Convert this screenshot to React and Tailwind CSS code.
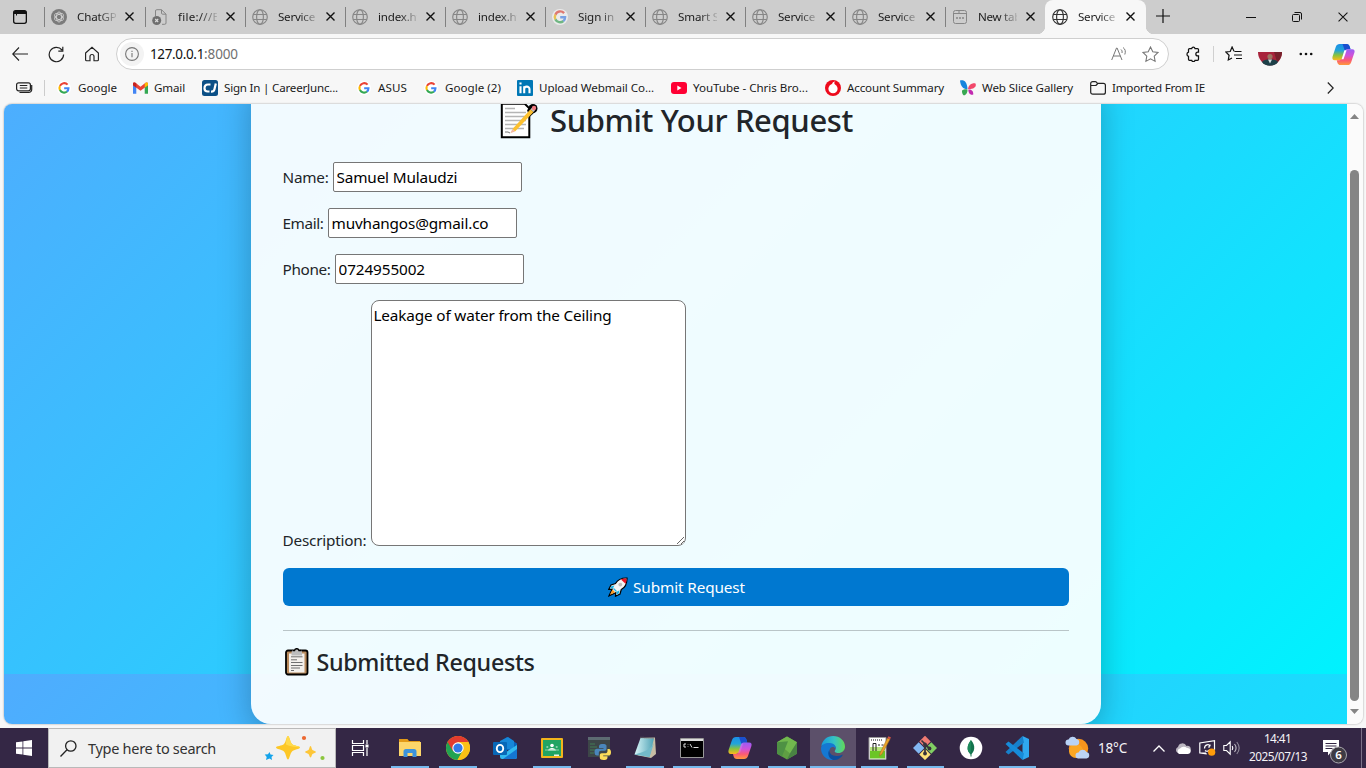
import React, { useLayoutEffect, useRef, useState } from "react";

/* Text run whose letter spacing is computed so that it fills `w` pixels. */
function Fit({ w, className = "", children }) {
  const ref = useRef(null);
  const [ls, setLs] = useState(0);
  useLayoutEffect(() => {
    const natural = ref.current.getBoundingClientRect().width;
    setLs((w - natural) / String(children).length);
  }, []);
  return (
    <span ref={ref} className={"inline-block shrink-0 whitespace-pre " + className} style={{ letterSpacing: ls + "px" }}>
      {children}
    </span>
  );
}

function Globe({ dark }) {
  return (
    <svg width="16" height="16" viewBox="0 0 16 16" fill="none" stroke={dark ? "#333" : "#868686"} strokeWidth="1.15">
      <circle cx="8" cy="8" r="7.3" />
      <ellipse cx="8" cy="8" rx="3.4" ry="7.3" />
      <path d="M1.2 5.5h13.6M1.2 10.5h13.6" />
    </svg>
  );
}

function GoogleG({ size = 16, faded }) {
  return (
    <svg width={size} height={size} viewBox="0 0 16 16" opacity={faded ? 0.6 : 1}>
      <circle cx="8" cy="8" r="8" fill="#fff" />
      <g fill="none" strokeWidth="2.4">
        <path d="M12.1 4.1A5.2 5.2 0 0 0 3.4 5.7" stroke="#ea4335" />
        <path d="M3.4 5.6a5.2 5.2 0 0 0 0 4.9" stroke="#fbbc05" />
        <path d="M3.4 10.4a5.2 5.2 0 0 0 8 1.6" stroke="#34a853" />
        <path d="M11.3 12.1A5 5 0 0 0 13.1 8.2H8.2" stroke="#4285f4" />
      </g>
    </svg>
  );
}

function ChatIcon() {
  return (
    <svg width="16" height="16" viewBox="0 0 16 16">
      <circle cx="8" cy="8" r="8" fill="#7b7b7b" />
      <g fill="none" stroke="#d8d8d8" strokeWidth=".8">
        <ellipse cx="8" cy="8" rx="2.5" ry="5" />
        <ellipse cx="8" cy="8" rx="2.5" ry="5" transform="rotate(60 8 8)" />
        <ellipse cx="8" cy="8" rx="2.5" ry="5" transform="rotate(120 8 8)" />
      </g>
    </svg>
  );
}

function FileIcon() {
  return (
    <svg width="16" height="16" viewBox="0 0 16 16" fill="none">
      <path d="M3.5 7V2A1.3 1.3 0 0 1 4.8 0.7H9.5L14 5.2V14a1.3 1.3 0 0 1-1.3 1.3H10M9.5 0.7V4a1.2 1.2 0 0 0 1.2 1.2H14" stroke="#868686" />
      <circle cx="4.7" cy="11.5" r="4.5" fill="#6f6f6f" />
      <path d="M3.2 10l3 3m0-3l-3 3" stroke="#ddd" strokeWidth="1.1" />
    </svg>
  );
}

function NewTabIcon() {
  return (
    <svg width="16" height="16" viewBox="0 0 16 16" fill="none" stroke="#868686">
      <rect x="1.5" y="1.5" width="13" height="13" rx="2" />
      <path d="M2 4.5h12M7 1.5v3" />
      <path d="M4 9h2m1 0h2m1 0h2" strokeWidth="1.6" />
    </svg>
  );
}

const X = ({ s = 9, w = 1.4 }) => (
  <svg width={s} height={s} viewBox="0 0 9 9" className="shrink-0" stroke="#111" strokeWidth={w}>
    <path d="M.5.5l8 8m0-8l-8 8" />
  </svg>
);

const TABS = [
  ["ChatGPT", 46, <ChatIcon />],
  ["file:///E:/", 49, <FileIcon />],
  ["Service", 37, <Globe />],
  ["index.html", 56, <Globe />],
  ["index.html", 56, <Globe />],
  ["Sign in", 36, <GoogleG faded />],
  ["Smart S", 41, <Globe />],
  ["Service", 37, <Globe />],
  ["Service", 37, <Globe />],
  ["New tab", 43, <NewTabIcon />],
];

function TabBody({ title, w, icon }) {
  return (
    <>
      <span className="flex w-4 shrink-0">{icon}</span>
      <span className="ml-[10px] w-[39px] shrink-0 overflow-hidden text-[11.6px] leading-5 text-[#1b1b1b] [mask-image:linear-gradient(to_right,#000_55%,transparent_108%)]">
        <Fit w={w}>{title}</Fit>
      </span>
      <span className="ml-[9px] flex"><X /></span>
    </>
  );
}

function TabStrip() {
  return (
    <div className="flex h-[34px] bg-[#cdcdcd]">
      <div className="flex w-[44px] items-center pl-[13px]">
        <svg width="14" height="14" viewBox="0 0 14 14">
          <rect x=".65" y=".65" width="12.7" height="12.7" rx="2" fill="none" stroke="#111" strokeWidth="1.3" />
          <path d="M.5 4V3A2.5 2.5 0 0 1 3 .5h8A2.500 2.500 0 0 1 13.500 3v1z" fill="#111" />
          <path d="M3.500 4v1.500" stroke="#111" />
        </svg>
      </div>
      {TABS.map(([t, w, icon], i) => (
        <div key={i} className={"flex shrink-0 items-center pb-px " + (i === 0 ? "w-[101px]" : "w-[100px]")}>
          <span className="mr-[6px] h-5 w-px bg-[#808080]" />
          <TabBody title={t} w={w} icon={icon} />
        </div>
      ))}
      <div className="relative flex w-[101px] shrink-0 items-center rounded-t-lg bg-[#f7f7f7] pb-px pl-[7px]">
        <span className="absolute -left-2 bottom-0 h-2 w-2 bg-[radial-gradient(circle_at_0_0,transparent_8px,#f7f7f7_8.5px)]" />
        <span className="absolute -right-2 bottom-0 h-2 w-2 bg-[radial-gradient(circle_at_100%_0,transparent_8px,#f7f7f7_8.5px)]" />
        <TabBody title="Service" w={37} icon={<Globe dark />} />
      </div>
      <div className="flex items-center pb-[2px] pl-[10px]">
        <svg width="14" height="14" viewBox="0 0 14 14" stroke="#111" strokeWidth="1.2"><path d="M0 7h14M7 0v14" /></svg>
      </div>
      <div className="flex flex-1 items-center justify-end gap-[36px] pr-[18px]">
        <svg width="10" height="10" viewBox="0 0 10 10" stroke="#111"><path d="M0 5.500h10" /></svg>
        <svg width="10" height="10" viewBox="0 0 10 10" fill="none" stroke="#111">
          <rect x=".5" y="2.500" width="7" height="7" rx="1" />
          <path d="M2.500.5H8A1.500 1.500 0 0 1 9.500 2v5.500" />
        </svg>
        <X s={10} w={0.95} />
      </div>
    </div>
  );
}

function Copilot({ size = 22, id }) {
  return (
    <svg width={size} height={size} viewBox="0 0 24 24">
      <defs>
        <linearGradient id={id + "a"} x1="0" y1="0" x2="0" y2="1">
          <stop offset="0" stopColor="#1b8fe8" /><stop offset=".4" stopColor="#22a4d8" /><stop offset=".7" stopColor="#8cc33a" /><stop offset="1" stopColor="#ffb81c" />
        </linearGradient>
        <linearGradient id={id + "b"} x1="0" y1="0" x2="0" y2="1">
          <stop offset="0" stopColor="#9a5cf5" /><stop offset=".4" stopColor="#d052d8" /><stop offset=".7" stopColor="#fb5a74" /><stop offset="1" stopColor="#ff9a3a" />
        </linearGradient>
      </defs>
      <path d="M8 1h7c2 0 3 1.200 3.500 3l.8 2.500h-2.600c-1.700 0-2.700.9-3.200 2.500l-1.900 6C11 17 10 18 8 18H3C.6 18 0 16 .6 14L4 4c.7-2 2-3 4-3z" fill={`url(#${id}a)`} />
      <path d="M11 1h4.200c2 0 2.900 1.200 3.400 3l.7 2.500h-2.600c-1.700 0-2.500.7-3.100 2z" fill="#1b4fcf" />
      <path d="M16 23H9c-2 0-3-1.200-3.500-3L5 18h2.600c1.700 0 2.700-.9 3.200-2.500l1.900-6C13.300 7.500 14 6.500 16 6.500h5c2.400 0 3 1.500 2.400 3.500L20 20c-.7 2-2 3-4 3z" fill={`url(#${id}b)`} />
      <path d="M10 17l3-9.500h2.200l-3.200 9.500z" fill="#fff" opacity={id === "tb" ? 1 : 0.15} />
    </svg>
  );
}

const STAR = "M8 .9l2.150 4.500 4.900.7-3.550 3.450.85 4.900L8 12.100l-4.350 2.350.85-4.900L.95 6.100l4.900-.7z";

function Toolbar() {
  return (
    <div className="flex h-[40px] items-center">
      <div className="flex w-[116px] items-center pl-3">
        <svg width="16" height="14" viewBox="0 0 16 14" fill="none" stroke="#222" strokeWidth="1.1"><path d="M16 7H.8M7 .5L.7 7 7 13.500" /></svg>
        <svg className="ml-5" width="17" height="17" viewBox="0 0 17 17" fill="none" stroke="#222" strokeWidth="1.2"><path d="M15.600 8.500A7.200 7.200 0 1 1 14 4M14.800.8v4.400h-4.500" /></svg>
        <svg className="ml-[19px]" width="16" height="16" viewBox="0 0 16 16" fill="none" stroke="#222" strokeWidth="1.15"><path d="M1.600 7L8 1.200 14.400 7v6.700a1 1 0 0 1-1 1H10V10.500a2 2 0 0 0-4 0v4.200H2.600a1 1 0 0 1-1-1z" /></svg>
      </div>
      <div className="flex h-8 w-[1053px] items-center rounded-full border border-[#cfcfcf] bg-white pl-[3px]">
        <span className="flex h-6 w-6 items-center justify-center rounded-full bg-[#f3f3f3]">
          <svg width="14" height="14" viewBox="0 0 14 14" fill="none" stroke="#767676" strokeWidth="1.1"><circle cx="7" cy="7" r="6.4" /><path d="M7 6v4.200M7 3.700v1.200" /></svg>
        </span>
        <span className="ml-[6px] flex text-[13.5px] text-[#111]">
          <Fit w={54}>127.0.0.1</Fit><Fit w={34} className="text-[#707070]">:8000</Fit>
        </span>
        <svg className="ml-auto" width="16" height="16" viewBox="0 0 16 16" fill="none" stroke="#777"><path d="M.7 14L5.500 2h.6L11 14M2.300 10h7M10 3.500c1 .8 1.300 2 1 3.500M12 1.500c2.300 1.600 2.900 4 1.800 7" /></svg>
        <svg className="mr-[9px] ml-[15px]" width="17" height="17" viewBox="0 0 16 16" fill="none" stroke="#777"><path d={STAR} /></svg>
      </div>
      <svg className="ml-[16px]" width="16" height="16" viewBox="0 0 16 16" fill="none" stroke="#111" strokeWidth="1.25"><path d="M4.500 2.500h2.200a1.700 1.700 0 0 1 3.300 0h2.500a1 1 0 0 1 1 1V6h-.7a1.900 1.900 0 0 0 0 3.900h.7v3.400a1 1 0 0 1-1 1h-2.500a1.700 1.700 0 0 1-3.300 0H4.500a1 1 0 0 1-1-1V10.300a2.200 2.200 0 0 1 0-4.200V3.500a1 1 0 0 1 1-1z" /></svg>
      <span className="ml-[12px] h-4 w-px bg-[#d0d0d0]" />
      <svg className="ml-[11px]" width="17" height="16" viewBox="0 0 17 16" fill="none" stroke="#111" strokeWidth="1.2"><path d="M9 5.200L7.100 1 5.200 5.500.8 6l3.300 3.200L3.300 14 7 12M9.500 5.500h7M9 9h8M11 12.500h6" /></svg>
      <svg className="mt-[9px] ml-[16px]" width="24" height="14" viewBox="0 0 24 14">
        <path d="M0 0h24a12 13.500 0 0 1-24 0z" fill="#a8243c" />
        <path d="M16 0h8c0 5-3 9-5 10z" fill="#77222c" />
        <circle cx="12" cy="4.500" r="2.600" fill="#9b7762" />
        <path d="M4 10c1-2 4-2.500 8-2.500s7 .5 8 2.500c-3 5-13 5-16 0z" fill="#1d4048" />
        <path d="M10 7.500l2 4 2-4z" fill="#d6e1e2" />
      </svg>
      <svg className="ml-[17px]" width="14" height="4" viewBox="0 0 14 4" fill="#111"><circle cx="1.800" cy="2" r="1.300" /><circle cx="7" cy="2" r="1.300" /><circle cx="12.200" cy="2" r="1.300" /></svg>
      <span className="ml-[19px] flex"><Copilot id="tb" size={23} /></span>
    </div>
  );
}

const FAVS = [
  ["Google", 39, "w-[76px]", <GoogleG size={14} />],
  ["Gmail", 31, "w-[70px]", <svg width="15" height="12" viewBox="0 0 16 12"><path d="M0 1.500V12h3.500V4.500z" fill="#4285f4" /><path d="M16 1.500V12h-3.500V4.500z" fill="#34a853" /><path d="M0 1.500C0 0 1.500-.3 2.600.5L8 4.700 13.400.5c1.100-.8 2.600-.5 2.600 1V3L8 9 0 3z" fill="#ea4335" /><path d="M12.500 1.200l.9-.7c1.100-.8 2.600-.5 2.600 1V3l-3.500 2.600z" fill="#fbbc04" /><path d="M0 1.500C0 0 1.500-.3 2.600.5l.9.7v4.400L0 3z" fill="#c5221f" /></svg>],
  ["Sign In | CareerJunc...", 114, "w-[154px]", <svg width="16" height="16" viewBox="0 0 16 16"><rect width="16" height="16" rx="2.5" fill="#0b4f86" /><path d="M8.500 4.500H6C3.500 4.500 2.500 6.500 2.500 8.500s1.300 3 3.300 3h1.700M13.800 3.500l-1.400 6c-.4 1.600-1.500 2.300-3.400 2.200" fill="none" stroke="#fff" strokeWidth="2.2" /></svg>],
  ["ASUS", 29, "w-[67px]", <GoogleG size={14} />],
  ["Google (2)", 56, "w-[94px]", <GoogleG size={14} />],
  ["Upload Webmail Co...", 115, "w-[154px]", <svg width="16" height="16" viewBox="0 0 16 16"><rect width="16" height="16" rx="1" fill="#0077b5" /><path d="M3.500 6.200v7M3.500 2.500v2.100M7.200 13.200v-7M7.200 9c0-3 5.300-3.300 5.300.2v4" stroke="#fff" strokeWidth="2.1" fill="none" /></svg>],
  ["YouTube - Chris Bro...", 115, "w-[154px]", <svg width="16" height="12" viewBox="0 0 16 12"><rect width="16" height="12" rx="3" fill="#ff0033" /><path d="M6.300 3.500v5l4.200-2.500z" fill="#fff" /></svg>],
  ["Account Summary", 97, "w-[135px]", <svg width="16" height="16" viewBox="0 0 16 16"><circle cx="8" cy="8" r="8" fill="#ee0a1c" /><circle cx="8" cy="8.700" r="4.600" fill="#fff" /><path d="M7 4.500C7 2.800 8.500 1.500 10.500 1.200 9 2 9 3.500 10 4.800z" fill="#fff" /></svg>],
  ["Web Slice Gallery", 91, "w-[130px]", <svg width="16" height="16" viewBox="0 0 16 16"><path d="M0 .5c4-1 7 1 7.500 8.500C4 9.500.5 7 0 .5z" fill="#1685dd" /><path d="M2 10.500c2-1.500 4-1.500 5.500-1 .2 3-1.500 5.500-3.500 6-1.500-.5-2.200-3-2-5z" fill="#38a852" /><path d="M8 9C8.500 5 12 2.800 15.500 3.500 17 7 13 9.500 8 9z" fill="#f2486b" /><path d="M8.300 9.500c3-.3 5 1 5 5-3 1.200-5-1.500-5-5z" fill="#c22bb0" /></svg>],
  ["Imported From IE", 93, "w-[130px]", <svg width="16" height="14" viewBox="0 0 16 14" fill="none" stroke="#222" strokeWidth="1.2"><path d="M.7 4.300V2.600a2 2 0 0 1 2-2h2.600a1.500 1.500 0 0 1 1.100.5l1 1.200h6a2 2 0 0 1 2 2v6.900a2 2 0 0 1-2 2H2.700a2 2 0 0 1-2-2zM.7 4.500h4.600a1.500 1.500 0 0 0 1.100-.5L8 2.300" /></svg>],
];

function Favorites() {
  return (
    <div className="flex h-[30px] items-center pb-[2px]">
      <div className="flex w-[44px] pl-4">
        <svg width="17" height="12" viewBox="0 0 17 12" fill="none" stroke="#222" strokeWidth="1.2"><rect x=".6" y=".8" width="13.800" height="8" rx="2" /><path d="M3.800 3.500h7.500M3.800 6h7.500" /><path d="M15.700 3v4.500a3 3 0 0 1-3 3H3.500" /></svg>
      </div>
      <span className="mr-[11px] h-4 w-px bg-[#cccccc]" />
      {FAVS.map(([t, w, cls, icon], i) => (
        <div key={i} className={"flex shrink-0 items-center text-[11.6px] leading-4 text-[#1a1a1a] " + cls}>
          <span className="mr-[6px] flex w-4 shrink-0 items-center justify-center">{icon}</span>
          <Fit w={w}>{t}</Fit>
        </div>
      ))}
      <svg className="ml-[107px]" width="7" height="12" viewBox="0 0 7 12" fill="none" stroke="#222" strokeWidth="1.2"><path d="M.8.500L6.200 6 .8 11.500" /></svg>
    </div>
  );
}

function Memo() {
  return (
    <svg width="39" height="40" viewBox="0 0 39 40" className="-mt-[3px] shrink-0">
      <path d="M1.800 4.800h23l4.500 4.500v28.900H1.800z" fill="#fff" stroke="#000" strokeWidth="2" />
      <path d="M5 9.500h10M5 13.500h21M5 17.500h21M5 21.500h21M5 25.500h21M5 29.500h19" stroke="#b5b5b5" strokeWidth="1.3" />
      <circle cx="33" cy="9.500" r="4.500" fill="#000" />
      <path d="M27 11l4-3 4 5-5.500 5z" fill="#000" />
      <path d="M12.500 30L30.500 10.200l3 2.800L15 32.500z" fill="#fcc02f" />
      <path d="M12.500 30l-2.300 4.300L15 32.500z" fill="#f2b7a0" />
      <path d="M30.500 10.200l1.500-1.500 3 2.800-1.500 1.500z" fill="#c8c8c8" />
      <circle cx="34" cy="9" r="2.200" fill="#ef7a80" />
      <path d="M5 33h3l2 1" stroke="#777" fill="none" />
    </svg>
  );
}

function Clipboard() {
  return (
    <svg width="24" height="28" viewBox="0 0 24 28" className="shrink-0">
      <rect x="1" y="2.500" width="21.500" height="24" rx="2" fill="#b88a5c" stroke="#000" strokeWidth="1.8" />
      <path d="M4 5.500h15.500v19H4z" fill="#f3f0ec" />
      <path d="M6.500 4.500a5.300 4.500 0 0 1 10.500 0v3H6.500z" fill="#bdbdbd" />
      <path d="M7.500 2.500h2a2.300 2.300 0 0 1 4.500 0h2" stroke="#000" strokeWidth="1.4" fill="none" />
      <path d="M6 8.800h11.500M6 11.800h6M6 14.500h11.500M6 17.500h11.500M6 20h9M6 22.500h3" stroke="#6f6f6f" strokeWidth="1" />
    </svg>
  );
}

function Rocket() {
  return (
    <svg width="20" height="20" viewBox="0 0 20 20" className="shrink-0">
      <path d="M19 1C13 .8 9.500 3 7.500 6.500L3 8 .8 12.300l3.400-.2L1 18.800l6.800-3-.3 3.400L12 17l1.300-4.500C17 10.500 19.200 7 19 1z" fill="#f4f4f4" stroke="#000" strokeWidth="1.2" />
      <path d="M18.500 1.500c-2.500 0-4 .3-5.500 1l4.500 4.300c.7-1.500 1-3.200 1-5.300z" fill="#e81224" />
      <path d="M6.500 8.500l-3 .5-1.500 2.500 3-.3zM11.500 13.300l-.5 3-2.500 1.700.3-3.300z" fill="#18b5e8" />
      <circle cx="12.300" cy="7.600" r="1.900" fill="#bcbcbc" />
      <path d="M4.500 12.500L2 17.800l5.200-2.500z" fill="#ff9a1f" />
      <path d="M5.500 11.500l3 3" stroke="#27b7e8" strokeWidth="1.3" />
    </svg>
  );
}

function Field({ label, w, value, cls }) {
  return (
    <label className="mb-4 flex h-[30px] items-center">
      <Fit w={w} className="mr-1 pt-px">{label}</Fit>
      <input defaultValue={value} className={"h-[30px] w-[189px] rounded-[2px] border border-[#767676] bg-white px-[3px] text-black " + cls} />
    </label>
  );
}

function RequestPage() {
  return (
    <div className="flex flex-1 justify-center overflow-hidden bg-[linear-gradient(135deg,#4facfe,#00f2fe)] bg-[length:100%_620px] bg-[position:0_-50px]">
      <main className="-mt-5 h-[640px] w-[850px] rounded-b-[20px] bg-white/[0.93] px-8 pt-[14px] text-[15.3px] text-[#212529] shadow-[0_8px_32px_rgba(0,0,0,0.25)]">
        <h1 className="flex h-[45px] items-center justify-center pl-[2px] text-[31px] font-medium">
          <Memo />
          <Fit w={303} className="ml-[11px]">Submit Your Request</Fit>
        </h1>
        <form className="pt-[19px]">
          <Field label="Name:" w={46} value="Samuel Mulaudzi" cls="tracking-[-0.15px]" />
          <Field label="Email:" w={41} value="muvhangos@gmail.co" cls="tracking-[-0.15px]" />
          <Field label="Phone:" w={48} value="0724955002" cls="tracking-[-0.1px]" />
          <label className="flex items-end">
            <Fit w={84} className="mr-1 mb-[-6px]">Description:</Fit>
            <textarea defaultValue="Leakage of water from the Ceiling" className="h-[246px] w-[315px] resize rounded-lg border border-[#767676] bg-white px-[2px] py-[2px] leading-6 tracking-[-0.15px] text-black" />
          </label>
          <button type="button" className="mt-[22px] flex h-[38px] w-full items-center justify-center rounded-md bg-[#0078d0] pl-[2px] text-white">
            <Rocket />
            <Fit w={112} className="ml-[5px]">Submit Request</Fit>
          </button>
        </form>
        <hr className="mt-6 border-t border-[#b9c5c8]" />
        <h2 className="mt-[13px] flex h-9 items-center text-[23.3px] font-medium">
          <span className="ml-[2px] flex"><Clipboard /></span>
          <Fit w={218} className="ml-2">Submitted Requests</Fit>
        </h2>
      </main>
    </div>
  );
}

function ScrollBar() {
  return (
    <div className="flex w-4 flex-col items-center bg-[#fbfbfb] pt-[10px] pb-[9px]">
      <svg className="mr-px" width="9" height="5" viewBox="0 0 9 5" fill="#858585"><path d="M0 5h9L4.500 0z" /></svg>
      <span className="mt-[51px] mr-px h-[531px] w-[9px] rounded-full bg-[#858585]" />
      <svg className="mt-[8px] mr-px" width="9" height="5" viewBox="0 0 9 5" fill="#858585"><path d="M0 0h9L4.500 5z" /></svg>
    </div>
  );
}

const Svg = ({ children, v = 24, s = 24 }) => <svg width={s} height={s} viewBox={`0 0 ${v} ${v}`}>{children}</svg>;

const APPS = [
  ["w-[48px]", "", <Svg><g fill="none" stroke="#fff" strokeWidth="1.2"><path d="M4.500 4v3.500h11V4M4.500 20v-3.500h11V20M4.500 9.500h11v5h-11zM19 4v4M19 12v8" /></g><path d="M17.500 8.500h3v3h-3z" fill="#fff" /></Svg>],
  ["ml-[2px] w-[48px]", "w-[38px]", <Svg><path d="M1 3h8.500l1.500 2h11v3H1z" fill="#e39b17" /><path d="M1 6h22v14H1z" fill="#fdd66a" /><path d="M5.500 21v-5.500a2.500 2.500 0 0 1 2.500-2.500h8a2.500 2.500 0 0 1 2.500 2.500V21h-4v-4h-5v4z" fill="#3c93dc" /></Svg>],
  ["w-[47px]", "w-[38px]", <Svg><circle cx="12" cy="12" r="12" fill="#fbc116" /><path d="M1.600 6A12 12 0 0 0 11.500 24l5.200-9.300L12 12z" fill="#21a352" /><path d="M12 6h10.400A12 12 0 0 1 11.500 24l5.200-9z" fill="#fbc116" /><path d="M1.600 6l5.200 9L12 6h10.400A12 12 0 0 0 1.600 6z" fill="#e33b2e" /><circle cx="12" cy="12" r="5.700" fill="#fff" /><circle cx="12" cy="12" r="4.600" fill="#3379e8" /></Svg>],
  ["w-[47px]", "", <Svg><path d="M5 7l9-6 10 6.500v11L14 14z" fill="#0a64bd" /><path d="M7 5l8-4 6 4v8H7z" fill="#1687d8" /><path d="M7 12l7 3.500L24 9v12a2 2 0 0 1-2 2H9a2 2 0 0 1-2-2z" fill="#31b9ef" /><path d="M10 23l14-10v8a2 2 0 0 1-2 2z" fill="#1576d1" /><rect y="6" width="14" height="13" rx="1" fill="#0868b7" /><ellipse cx="7" cy="12.500" rx="3.200" ry="3.600" fill="none" stroke="#fff" strokeWidth="1.9" /></Svg>],
  ["w-[47px]", "w-[38px]", <Svg><rect x="1" y="2" width="22" height="20" rx="1" fill="#f2b51c" /><path d="M3 4h18v16H3z" fill="#22a463" /><path d="M14 20h5v-1.500h-5z" fill="#e9f5ee" /><circle cx="12" cy="9.500" r="1.800" fill="#fff" /><path d="M8 14.500c.5-3.500 7.500-3.500 8 0z" fill="#fff" /><circle cx="7.300" cy="11" r="1.100" fill="#8ed0ad" /><circle cx="16.700" cy="11" r="1.100" fill="#8ed0ad" /><path d="M5 14.500h14v-1H5z" fill="#8ed0ad" /></Svg>],
  ["w-[47px]", "", <Svg><path d="M1 1h22v20H1z" fill="#3d4648" /><path d="M1 1h22v3H1z" fill="#5d6b72" /><path d="M3 8h5M3 11h7M3 14h5M3 17h4" stroke="#427c54" /><path d="M16 8c-4 0-4 1-4 4h4.500v.8H10c-2 0-2.500 1.500-2.500 3.500s1 3.300 2.500 3.300h1.800V17c0-1.500 1-2.200 2.500-2.200h3.200c1.300 0 2-.8 2-2V10c0-1.500-1.500-2-3.500-2z" fill="#4a86bb" /><path d="M16.500 24c4 0 4-1.200 4-3.800h-4.300v-.7H22c1.500 0 2-1.500 2-3.300s-.8-3.200-2-3.200h-1.500v2c0 1.500-1 2.300-2.500 2.300h-3.200c-1.300 0-2 .8-2 2v2.500c0 1.500 1.500 2.200 3.700 2.200z" fill="#fbdc5a" /></Svg>],
  ["w-[46px]", "w-[38px]", <Svg><defs><linearGradient id="np" x1="0" x2="1"><stop stopColor="#d9f6f8" /><stop offset="1" stopColor="#4fa2b5" /></linearGradient></defs><path d="M8 2l14-.5L23 18l-5 4L3 19z" fill="#c8bda4" /><path d="M7.500 2L21 2.500 16.500 21 1.500 18.500z" fill="url(#np)" /><path d="M7.500 1.500L21 2" stroke="#6d6f70" strokeWidth="1.5" strokeDasharray="1 1" /><path d="M1.500 18.500l15 2.500 4.500-14C18 14 8 17 1.500 18.500z" fill="#73bac9" /></Svg>],
  ["w-[48px]", "w-[38px]", <Svg><path d="M.5 2.500h23v19H.5z" fill="#000" stroke="#999" /><path d="M1 3h22v2H1z" fill="#ddd" /><path d="M6 8H4v3h2M8 8.500v.5M8 10.500v.5M10 8l2 3.500M13.500 11.500h5" stroke="#ddd" fill="none" /></Svg>],
  ["w-[47px]", "w-[38px]", <Copilot id="ap" size={24} />],
  ["w-[47px]", "w-[38px]", <Svg><path d="M12 .5l10 5.700v11.600L12 23.500 2 17.800V6.200z" fill="#5f9f43" /><path d="M12 .5l10 5.700-7 11.300L2 6.200z" fill="#71b84e" /><path d="M2 6.200l11-1L7 20.500l-5-2.700z" fill="#4e9144" /><path d="M22 6.200v11.600l-10 5.700 3-6z" fill="#498243" /></Svg>],
  ["w-[46px] bg-[#5c506a]", "w-[46px]", <Svg><defs><linearGradient id="eg" x1="0" x2="1"><stop stopColor="#1699dc" /><stop offset=".55" stopColor="#36c3c4" /><stop offset="1" stopColor="#62d957" /></linearGradient></defs><path d="M.3 10C1.500 4 6 0 12 0c7 0 12 5 12 10.500 0 4-3 6.500-6.500 6.500-3 0-4.500-1.200-3.500-2.500 2.500-3.500-1-6.500-5-6.500C5 8 1.500 9 .3 10z" fill="url(#eg)" /><path d="M.1 11.500C.8 8 5 6.500 9 7c4 .5 6.500 3 5.500 6C13 9.500 8 11 8.500 15.500c.5 4 4 7 7 8.200C7 26-.8 19.500.1 11.500z" fill="#1478d2" /><path d="M8.500 14c-.5 5 5 8 13.500 4.500-2 4-6.500 6-10 5.500C6.500 22 6.500 16 8.500 14z" fill="#0d4e9d" /></Svg>],
  ["w-[46px]", "w-[37px]", <Svg><path d="M2 1.500h17v22H2z" fill="#fff" stroke="#999" /><path d="M3 14h15v8.500H3z" fill="#6bc524" /><path d="M3 11h15v4H3z" fill="#b7e67b" /><path d="M4 4h11" stroke="#888" strokeWidth="2" strokeDasharray="1 1" /><path d="M6 15V7.500h3V15M11 9h2M14.500 9h2" stroke="#222" fill="none" /><path d="M13 17L20.500 2l2.500 1.300L15 18l-2.500 2z" fill="#e9a32c" stroke="#9c6b22" strokeWidth=".5" /><path d="M20.500 2l1-1.700L24 1.500l-1 1.800z" fill="#d85745" /></Svg>],
  ["w-[46px]", "w-[37px]", <Svg><path d="M12 -.3l5.700 5.700-5.700 5.700-5.700-5.700z" fill="#f07b72" /><path d="M5.700 6.300l5.700 5.700-5.700 5.700L0 12z" fill="#83b8f3" /><path d="M18.300 6.300L24 12l-5.700 5.700-5.700-5.700z" fill="#81cf63" /><path d="M12 12.700l5.700 5.700-5.700 5.700-5.700-5.700z" fill="#ffe278" /><path d="M8.500 4.500l3.500 3.500V18M12 8.500l4.500 4" stroke="#38333b" strokeWidth="1.7" fill="none" /><circle cx="12" cy="8.500" r="1.900" fill="#38333b" /><circle cx="12" cy="17.500" r="1.900" fill="#38333b" /><circle cx="16.500" cy="12.500" r="1.900" fill="#38333b" /></Svg>],
  ["w-[46px]", "", <Svg><circle cx="12" cy="12" r="11.300" fill="#fff" /><path d="M12 4c5.300 6 3.300 12-.2 14.500C7.500 15 7.500 10 12 4z" fill="#13734d" /><path d="M12 4c-4.500 6-4.500 11-.2 14.500z" fill="#1d8a5c" /><path d="M12 16v4.500" stroke="#13734d" /></Svg>],
  ["w-[46px]", "w-[37px]", <Svg><path d="M17.500 0L24 3v18l-6.500 3z" fill="#2fa8f0" /><path d="M17.500 0L19 6.500 3.500 18.500.5 16z" fill="#1780cb" /><path d="M17.500 24L19 17.500 3.500 5.500.5 8z" fill="#168bd9" /></Svg>],
];

function Taskbar() {
  return (
    <div className="flex h-10 bg-[#342745] text-[#f5f3f7]">
      <div className="flex w-12 items-center justify-center">
        <svg width="16" height="16" viewBox="0 0 16 16" fill="#fff"><path d="M0 2.300l6.500-.9v6.200H0zM7.300 1.300L16 0v7.600H7.300zM0 8.400h6.500v6.200L0 13.700zM7.300 8.400H16V16l-8.700-1.200z" /></svg>
      </div>
      <div className="flex w-[288px] items-center border border-[#b9b9b9] bg-[#f1f1f1] pl-[11px] text-[14.5px] text-[#333]">
        <svg width="17" height="17" viewBox="0 0 17 17" fill="none" stroke="#222" strokeWidth="1.3"><circle cx="10.800" cy="6" r="5.200" /><path d="M7 9.800L.5 16.500" /></svg>
        <Fit w={128} className="ml-[11px] pt-px">Type here to search</Fit>
        <svg className="ml-[48px]" width="64" height="28" viewBox="0 0 64 28">
          <path d="M24 2c1.500 0 2 6 4 8s8 2 8 3.500-6 2-8 4-2.500 8-4 8-2-6-4-8-8-2.500-8-4 6-1.500 8-3.500 2.500-8 4-8z" fill="#fdc726" />
          <path d="M24 2c1.500 0 2 6 4 8s8 2 8 3.500c-6-1-10-1-14-3C22 8 22.500 2 24 2z" fill="#ffda4b" />
          <path d="M46.500 12c1 0 1 3 2 4s3.500 1 3.500 2-2.500 1-3.500 2-1 3.500-2 3.500-1-2.500-2-3.500-3.500-1-3.500-2 2.500-1 3.500-2 1-4 2-4z" fill="#fdc638" />
          <path d="M5.500 18l1 2.500 3 .5-2 2 .5 3-2.500-1.500L2 26l.7-3-2-2.500 3.300-.3z" fill="#14a3ea" />
          <circle cx="40" cy="4" r="2.100" fill="#ec6730" /><circle cx="58.500" cy="24" r="2.100" fill="#8cc63f" />
        </svg>
      </div>
      {APPS.map(([cls, bar, icon], i) => (
        <div key={i} className={"flex shrink-0 flex-col items-center justify-between pt-2 " + cls}>
          {icon}
          <span className={"h-[2px] bg-[#76b9ed] " + bar} />
        </div>
      ))}
      <div className="ml-[25px] flex items-center">
        <svg width="26" height="24" viewBox="0 0 26 24">
          <circle cx="13.500" cy="12.500" r="9.700" fill="#f8951d" /><circle cx="11" cy="15" r="7" fill="#fba623" />
          <path d="M3.500 9.500a3 3 0 0 1 0-6 4.500 4.500 0 0 1 8-.5 3.300 3.300 0 0 1 0 6.500z" fill="#b9d3f6" />
          <path d="M13.500 22.500a3 3 0 0 1 0-6 4.500 4.500 0 0 1 8-.5 3.300 3.300 0 0 1 0 6.500z" fill="#bdd4f5" />
        </svg>
        <Fit w={29} className="ml-[7px] text-[13.5px]">18°C</Fit>
        <svg className="ml-[26px]" width="12" height="7" viewBox="0 0 12 7" fill="none" stroke="#fff" strokeWidth="1.3"><path d="M.5 6.500L6 1l5.500 5.500" /></svg>
        <svg className="ml-[10px]" width="16" height="11" viewBox="0 0 16 11"><path d="M3 10a3.200 3.200 0 0 1 0-6A4.500 4.500 0 0 1 11.500 3 3.500 3.500 0 0 1 13 10z" fill="#bcb7c1" /><path d="M4 11a3 3 0 0 1 1-5.500 5 5 0 0 1 7-.5 3 3 0 0 1 1 6z" fill="#fff" /></svg>
        <svg className="ml-[8px]" width="18" height="16" viewBox="0 0 18 16" fill="none" stroke="#fff" strokeWidth="1.2"><path d="M7 13H.8V3L15.500.7v9M.8 13l7 .8M5.500 8.500c0-4 4.500-5 5.500-2.200V4.500M11 7H9M6 10.500c2 1.500 4 .5 4.700-1" /><circle cx="12.700" cy="12.200" r="3.600" fill="#ff9c0a" stroke="none" /></svg>
        <svg className="ml-[6px]" width="17" height="16" viewBox="0 0 17 16" fill="none" stroke="#fff" strokeWidth="1.1"><path d="M.8 5.500h2.700l3.700-3.700v12.400L3.500 10.500H.8zM9.200 6c.8 1.300.8 2.700 0 4" /><path d="M11.500 4c2 2.500 2 5.500 0 8" opacity=".7" /><path d="M13.800 2c3 3.800 3 8.200 0 12" opacity=".45" /></svg>
      </div>
      <div className="ml-[8px] flex w-[60px] flex-col items-center justify-center pb-[2px] text-[11.8px] leading-[18px]">
        <Fit w={27} className="-ml-px">14:41</Fit>
        <Fit w={58}>2025/07/13</Fit>
      </div>
      <div className="mt-[5px] flex items-center pl-[14px]">
        <svg width="26" height="26" viewBox="0 0 26 26">
          <path d="M1 2h16v12H9l-3 3.500V14H1z" fill="#fff" /><path d="M3.500 5.500h11M3.500 8h11M3.500 10.500h7" stroke="#342745" />
          <circle cx="16.500" cy="17" r="8" fill="#3e3b44" stroke="#a9a6ad" /><text x="16.500" y="21" textAnchor="middle" fill="#fff" fontSize="11.500" fontWeight="600">6</text>
        </svg>
      </div>
      <span className="ml-auto w-px bg-[#7b7288]" />
      <span className="w-[4px]" />
    </div>
  );
}

export default function App() {
  return (
    <div className="flex h-[768px] w-[1366px] flex-col overflow-hidden bg-[#f7f7f7] font-['Noto_Sans','Open_Sans',sans-serif]">
      <TabStrip />
      <Toolbar />
      <Favorites />
      <div className="mr-[3px] mb-1 ml-1 flex h-[620px] shrink-0 overflow-hidden rounded-lg shadow-[0_0_2px_rgba(0,0,0,0.4)]">
        <RequestPage />
        <ScrollBar />
      </div>
      <Taskbar />
    </div>
  );
}
